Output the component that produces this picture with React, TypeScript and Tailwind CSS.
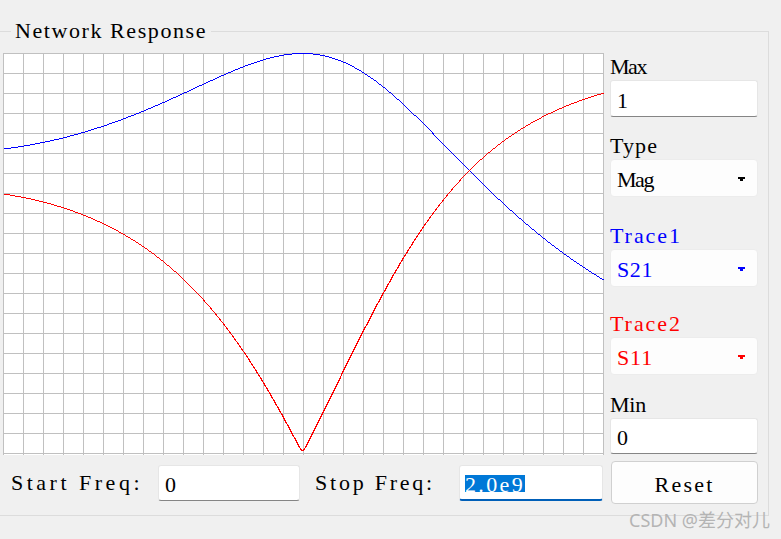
import React from "react";

const SERIF = '"Liberation Serif", "Noto Sans CJK SC", serif';
const SIZE = 22;
const CELL = 12;

let ctx: CanvasRenderingContext2D | null = null;

// the Qt app draws with a fixed 12px advance; spread the serif text to that grid
function cellSpacing(text: string) {
  if (!ctx) ctx = document.createElement("canvas").getContext("2d");
  if (!ctx) return 0;
  ctx.font = `${SIZE}px ${SERIF}`;
  const w = ctx.measureText(text).width;
  return (CELL * text.length - w) / text.length;
}

function T({ children, className = "" }: { children: string; className?: string }) {
  return (
    <span className={className} style={{ letterSpacing: `${cellSpacing(children)}px` }}>
      {children}
    </span>
  );
}

function curve(kind: "s21" | "s11") {
  const pts: string[] = [];
  for (let x = 0; x <= 600; x++) {
    const u = (x - 299) / 300;
    const X = 1.46 * u + 0.607 * u * u;
    const d = Math.sqrt(1 + X * X);
    const v = kind === "s21" ? 1 / d : Math.sqrt(X * X + 0.00004) / d;
    pts.push(`${x + 0.5},${Math.round(400 - 400 * v) + 0.5}`);
  }
  return pts.join(" ");
}

function Chart() {
  const cols = Array.from({ length: 31 }, (_, i) => i * 20);
  const rows = Array.from({ length: 21 }, (_, i) => i * 20);
  return (
    <div className="h-[402px] w-[601px] bg-white">
      <svg width="601" height="402" shapeRendering="crispEdges">
        {cols.map((x) => (
          <line key={`c${x}`} x1={x + 0.5} y1={0} x2={x + 0.5} y2={402} stroke="#c0c0c0" />
        ))}
        {rows.map((y) => (
          <line key={`r${y}`} x1={0} y1={y + 0.5} x2={601} y2={y + 0.5} stroke="#c0c0c0" />
        ))}
        <polyline points={curve("s21")} fill="none" stroke="#0000ff" strokeWidth={1} />
        <polyline points={curve("s11")} fill="none" stroke="#ff0000" strokeWidth={1} />
      </svg>
    </div>
  );
}

function Label({ text, color, mt }: { text: string; color: string; mt: string }) {
  return (
    <div className={`h-[24px] leading-[21px] ${mt} ${color}`}>
      <T>{text}</T>
    </div>
  );
}

function Field({ value, h }: { value: string; h: string }) {
  return (
    <div
      className={`flex ${h} w-[148px] items-center rounded-[3px] border border-[#e6e6e6] border-b-[#858585] bg-white pl-[6px] pt-[3px]`}
    >
      <T>{value}</T>
    </div>
  );
}

function Combo({ value, color, fill }: { value: string; color: string; fill: string }) {
  return (
    <div
      className={`flex h-[38px] w-[148px] items-center justify-between rounded-[4px] border border-[#ececec] bg-[#fdfdfd] pl-[6px] pr-[12px] pt-[3px] ${color}`}
    >
      <T>{value}</T>
      <svg width="7" height="5" viewBox="0 0 7 5">
        <rect x="0" y="0" width="7" height="2" fill={fill} />
        <rect x="2" y="2" width="3" height="2" fill={fill} />
      </svg>
    </div>
  );
}

export default function App() {
  return (
    <div
      className="relative h-[539px] w-[781px] overflow-hidden bg-[#f0f0f0] text-[22px] text-black"
      style={{ fontFamily: SERIF }}
    >
      <div className="relative mt-[31px] h-[485px] w-[769px] border-b border-r border-t border-[#dcdcdc]">
        <div className="absolute left-[11px] top-[-13px] bg-[#f0f0f0] px-[4px] leading-[24px]">
          <T>Network Response</T>
        </div>

        <div className="flex pl-[3px] pt-[21px]">
          <Chart />
          <div className="ml-[6px] flex w-[148px] flex-col">
            <Label text="Max" color="text-black" mt="mt-[3px]" />
            <Field value="1" h="h-[37px]" />
            <Label text="Type" color="text-black" mt="mt-[18px]" />
            <Combo value="Mag" color="text-black" fill="#000" />
            <Label text="Trace1" color="text-[#0000ff]" mt="mt-[28px]" />
            <Combo value="S21" color="text-[#0000ff]" fill="#0000ff" />
            <Label text="Trace2" color="text-[#ff0000]" mt="mt-[26px]" />
            <Combo value="S11" color="text-[#ff0000]" fill="#ff0000" />
            <Label text="Min" color="text-black" mt="mt-[19px]" />
            <Field value="0" h="h-[36px]" />
          </div>
        </div>

        <div className="mt-[6px] flex h-[43px] items-center">
          <div className="ml-[11px] w-[147px]">
            <T>Start Freq:</T>
          </div>
          <div className="flex h-[36px] w-[142px] items-center rounded-[3px] border border-[#e6e6e6] border-b-[#858585] bg-white pl-[6px] pt-[3px]">
            <T>0</T>
          </div>
          <div className="ml-[15px] w-[144px]">
            <T>Stop Freq:</T>
          </div>
          <div className="flex h-[36px] w-[144px] items-center rounded-[3px] border border-[#e6e6e6] border-b-2 border-b-[#005fb8] bg-white pl-[5px] pt-[2px]">
            <span className="inline-block h-[17px] bg-[#0078d7] leading-[19px] text-white">
              <T>2.0e9</T>
            </span>
          </div>
          <div className="ml-[8px] flex h-[43px] w-[147px] items-center justify-center rounded-[4px] border border-[#d0d0d0] bg-[#fdfdfd] pt-[3px]">
            <T>Reset</T>
          </div>
        </div>
      </div>

      <div
        className="absolute left-[629px] top-[511px] text-[18px] leading-[18px] text-[#b4b4b4]"
        style={{ fontFamily: '"Noto Sans", "Noto Sans CJK SC", sans-serif' }}
      >
        CSDN @差分对儿
      </div>
    </div>
  );
}
